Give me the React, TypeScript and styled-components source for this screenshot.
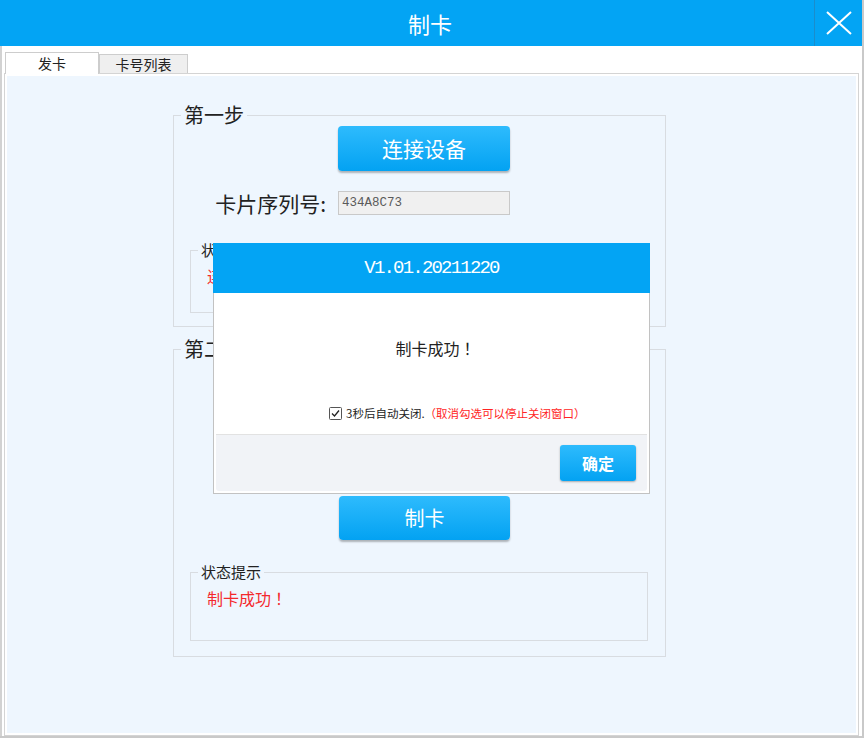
import React from "react";
import styled, { createGlobalStyle } from "styled-components";

const BLUE = "#03a4f4";
const CJK = `"Noto Sans CJK SC", "Noto Sans", sans-serif`;
const CJK_CENTERED = `"Noto Sans CJK JP", "Noto Sans CJK SC", sans-serif`;

const Global = createGlobalStyle`
  html, body { margin: 0; padding: 0; background: #fff; }
  body { font-family: ${CJK}; }
  * { box-sizing: border-box; }
`;

const Window = styled.div`
  position: relative;
  width: 864px;
  height: 738px;
  display: flex;
  flex-direction: column;
  background: #fff;
  border-right: 2px solid #c9c9c9;
  border-bottom: 2px solid #c9c9c9;
  overflow: hidden;
  font-family: ${CJK};
  color: #222;
`;

const TitleBar = styled.header`
  flex: none;
  height: 46px;
  display: flex;
  background: ${BLUE};
`;

const Title = styled.h1`
  flex: 1;
  margin: 0;
  padding-left: 46px;
  text-align: center;
  font-size: 22px;
  font-weight: normal;
  line-height: 46px;
  color: #fff;
`;

const CloseButton = styled.button`
  width: 48px;
  height: 46px;
  padding: 0;
  border: 0;
  border-left: 1px solid #1a8dcc;
  background: ${BLUE};
  display: flex;
  align-items: center;
  justify-content: center;
`;

const Body = styled.main`
  flex: 1;
  min-height: 0;
  display: flex;
  flex-direction: column;
  padding: 6px 3px 0 2px;
  border-left: 2px solid #d2d2d2;
`;

const TabBar = styled.div`
  position: relative;
  z-index: 1;
  height: 21px;
  margin-left: 1px;
  display: flex;
  align-items: flex-end;
`;

const Tab = styled.div<{ $active?: boolean; $w: number }>`
  width: ${(p) => p.$w}px;
  height: ${(p) => (p.$active ? 22 : 19)}px;
  margin-bottom: ${(p) => (p.$active ? -1 : 0)}px;
  background: ${(p) => (p.$active ? "#fff" : "#efefef")};
  border: 1px solid #cdcdcd;
  border-bottom: 0;
  font-size: 14px;
  line-height: ${(p) => (p.$active ? 20 : 18)}px;
  text-align: center;
  color: #222;
`;

const Panel = styled.section`
  flex: 1;
  min-height: 0;
  border: 1px solid #d4d4d4;
  padding: 2px;
  background: #fff;
  display: flex;
`;

const PanelInner = styled.div`
  flex: 1;
  background: #eef6fe;
  padding: 28px 0 0 166px;
`;

const Group = styled.fieldset<{ $pb: number }>`
  margin: 0;
  padding: 0 0 ${(p) => p.$pb}px;
  width: 493px;
  min-width: 0;
  border: 1px solid #d8dce1;
  & + & {
    margin-top: 11px;
  }
`;

const GroupTitle = styled.legend`
  margin-left: 7px;
  padding: 0 3px;
  font-size: 20px;
  line-height: 22px;
  color: #222;
`;

const Row = styled.div<{ $mt: number }>`
  margin-top: ${(p) => p.$mt}px;
  display: grid;
  grid-template-columns: 152px 172px;
  column-gap: 12px;
  align-items: center;
`;

const Label = styled.label`
  text-align: right;
  font-size: 21px;
  line-height: 24px;
  color: #222;
  white-space: nowrap;
`;

const BlueButton = styled.button<{ $w: number; $h: number; $fs: number }>`
  grid-column: 2;
  width: ${(p) => p.$w}px;
  height: ${(p) => p.$h}px;
  margin-left: ${(p) => 172 - p.$w}px;
  padding: 0;
  border: 0;
  border-radius: 4px;
  background: linear-gradient(#2ebbfd, #03a2f2);
  box-shadow: 0 2px 2px rgba(0, 0, 0, 0.28);
  color: #fff;
  font-family: ${CJK};
  font-size: ${(p) => p.$fs}px;
  line-height: ${(p) => p.$h}px;
`;

const SerialInput = styled.input`
  width: 172px;
  height: 24px;
  padding: 0 3px;
  border: 1px solid #c9c9c9;
  background: #f0f0f0;
  font-family: "Liberation Mono", monospace;
  font-size: 12.5px;
  color: #5a5a5a;
  outline: none;
`;

const Status = styled.fieldset<{ $h: number }>`
  margin: 0 0 0 16px;
  padding: 6px 0 0;
  width: 458px;
  height: ${(p) => p.$h}px;
  min-width: 0;
  border: 1px solid #d8dce1;
`;

const StatusTitle = styled.legend`
  margin-left: 7px;
  padding: 0 3px;
  font-size: 15px;
  line-height: 20px;
  color: #222;
`;

const StatusText = styled.div`
  padding-left: 16px;
  font-family: ${CJK_CENTERED};
  font-size: 16px;
  line-height: 20px;
  color: #f4282c;
`;

const Spacer = styled.div<{ $h: number }>`
  height: ${(p) => p.$h}px;
`;

/* ---------- dialog ---------- */

const Dialog = styled.div`
  position: absolute;
  left: 213px;
  top: 243px;
  width: 437px;
  height: 251px;
  display: flex;
  flex-direction: column;
  z-index: 5;
`;

const DialogHead = styled.div`
  height: 50px;
  flex: none;
  background: ${BLUE};
  color: #fff;
  text-align: center;
  font-family: "Liberation Mono", monospace;
  font-size: 19px;
  letter-spacing: -1.8px;
  line-height: 50px;
`;

const DialogFrame = styled.div`
  flex: 1;
  display: flex;
  flex-direction: column;
  background: #fff;
  border: 1px solid #c2c2c2;
  border-top: 0;
`;

const DialogBody = styled.div`
  height: 141px;
  display: flex;
  flex-direction: column;
`;

const Message = styled.p`
  margin: 45px 0 0;
  padding-left: 8px;
  text-align: center;
  font-family: ${CJK_CENTERED};
  font-size: 16px;
  line-height: 20px;
  color: #222;
`;

const AutoClose = styled.label`
  margin: auto 0 13px;
  padding-left: 115px;
  height: 16px;
  display: flex;
  align-items: center;
  font-size: 11.5px;
  color: #222;
  white-space: nowrap;
`;

const Check = styled.span`
  width: 13px;
  height: 13px;
  margin-right: 4px;
  display: inline-flex;
`;

const Hint = styled.span`
  color: #ff2424;
`;

const DialogFoot = styled.div`
  flex: 1;
  margin: 0 2px 2px;
  padding: 10px 11px 0 0;
  border-top: 1px solid #e2e2e2;
  border-radius: 0 0 3px 3px;
  background: #f1f3f7;
  display: flex;
  justify-content: flex-end;
  align-items: flex-start;
`;

const OkButton = styled.button`
  width: 76px;
  height: 36px;
  padding: 0;
  border: 0;
  border-radius: 3px;
  background: linear-gradient(#2ebbfd, #03a2f2);
  box-shadow: 0 1px 2px rgba(0, 0, 0, 0.3);
  color: #fff;
  font-family: ${CJK};
  font-size: 16px;
  font-weight: bold;
  line-height: 36px;
`;

export default function App() {
  return (
    <>
      <Global />
      <Window>
        <TitleBar>
          <Title>制卡</Title>
          <CloseButton aria-label="关闭">
            <svg width="26" height="24" viewBox="0 0 26 24">
              <path d="M1 1 L25 23 M25 1 L1 23" stroke="#fff" strokeWidth="2" fill="none" />
            </svg>
          </CloseButton>
        </TitleBar>
        <Body>
          <TabBar>
            <Tab $active $w={94}>发卡</Tab>
            <Tab $w={89}>卡号列表</Tab>
          </TabBar>
          <Panel>
            <PanelInner>
              <Group $pb={13}>
                <GroupTitle>第一步</GroupTitle>
                <Row $mt={0}>
                  <BlueButton $w={172} $h={45} $fs={21}>连接设备</BlueButton>
                </Row>
                <Row $mt={20}>
                  <Label>卡片序列号:</Label>
                  <SerialInput readOnly value="434A8C73" />
                </Row>
                <Spacer $h={25} />
                <Status $h={73}>
                  <StatusTitle>状态提示</StatusTitle>
                  <StatusText>连接设备成功！</StatusText>
                </Status>
              </Group>
              <Group $pb={15}>
                <GroupTitle>第二步</GroupTitle>
                <Row $mt={53}>
                  <Label>输入卡片号:</Label>
                  <SerialInput readOnly value="" />
                </Row>
                <Row $mt={59}>
                  <BlueButton $w={171} $h={44} $fs={20}>制卡</BlueButton>
                </Row>
                <Spacer $h={22} />
                <Status $h={79}>
                  <StatusTitle>状态提示</StatusTitle>
                  <StatusText>制卡成功！</StatusText>
                </Status>
              </Group>
            </PanelInner>
          </Panel>
        </Body>

        <Dialog role="dialog">
          <DialogHead>V1.01.20211220</DialogHead>
          <DialogFrame>
            <DialogBody>
              <Message>制卡成功！</Message>
              <AutoClose>
                <Check>
                  <svg width="13" height="13" viewBox="0 0 13 13">
                    <rect x="0.5" y="0.5" width="12" height="12" rx="1" fill="#fff" stroke="#555" />
                    <path d="M3 6.5 L5.5 9 L10 3.5" stroke="#222" strokeWidth="1.3" fill="none" />
                  </svg>
                </Check>
                3秒后自动关闭.<Hint>（取消勾选可以停止关闭窗口）</Hint>
              </AutoClose>
            </DialogBody>
            <DialogFoot>
              <OkButton>确定</OkButton>
            </DialogFoot>
          </DialogFrame>
        </Dialog>
      </Window>
    </>
  );
}
